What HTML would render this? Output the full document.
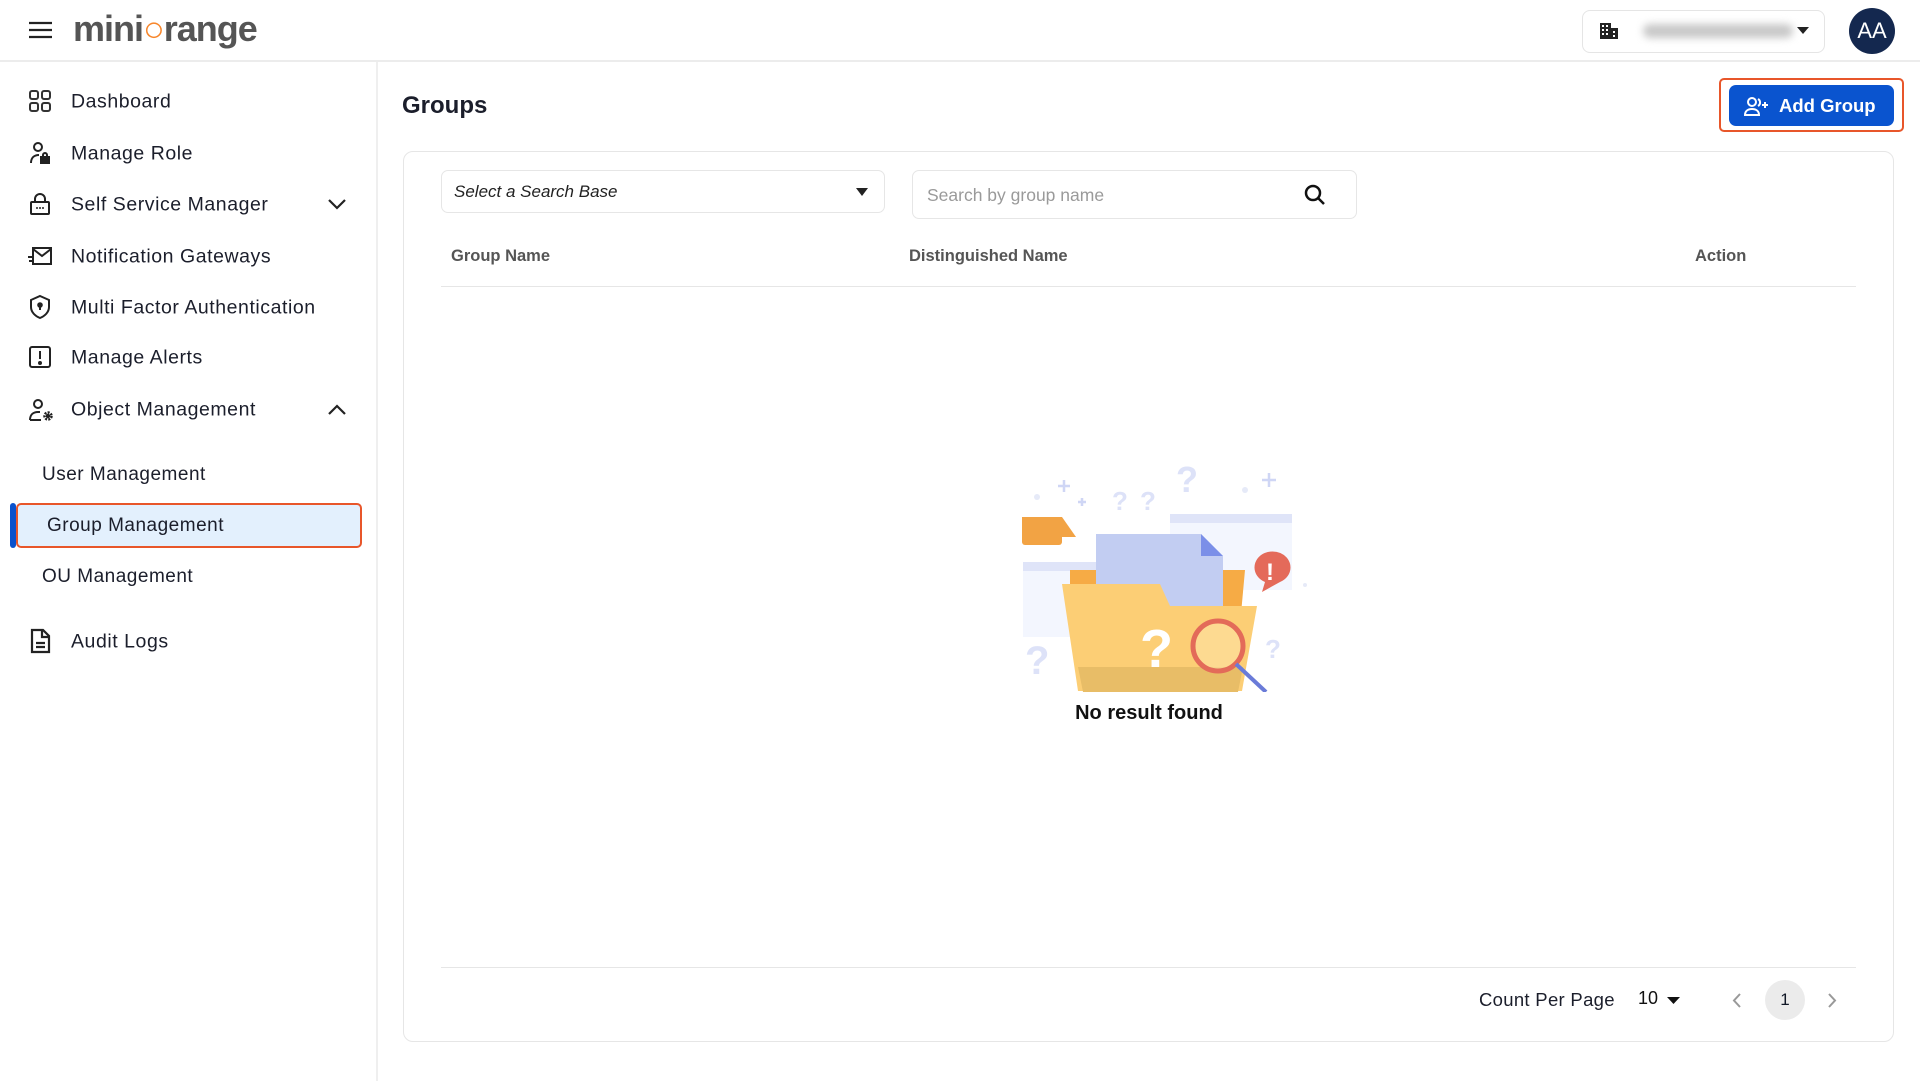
<!DOCTYPE html>
<html><head><meta charset="utf-8"><style>
*{box-sizing:border-box;margin:0;padding:0}
body{width:1920px;height:1081px;background:#fff;font-family:"Liberation Sans",sans-serif;color:#111827;position:relative;overflow:hidden}
.abs{position:absolute}
.hdr{left:0;top:0;width:1920px;height:62px;border-bottom:2px solid #ececec}
.side{left:376px;top:62px;width:2px;height:1019px;background:#efefef}
.nav{position:absolute;left:71px;font-size:19.5px;color:#1b1e2b;letter-spacing:.55px;transform:translateY(-50%)}
.ico{position:absolute;left:28px;transform:translateY(-50%)}
.sub{position:absolute;left:42px;font-size:19px;color:#1b1e2b;transform:translateY(-50%);letter-spacing:.5px}
svg{display:block}
</style></head><body>
<div class="abs hdr"></div>
<svg class="abs" style="left:29px;top:21px" width="23" height="18"><g stroke="#222" stroke-width="2.2"><line x1="0" y1="2" x2="23" y2="2"/><line x1="0" y1="9" x2="23" y2="9"/><line x1="0" y1="16" x2="23" y2="16"/></g></svg>
<div class="abs" style="left:73px;top:9px;font-size:36px;font-weight:bold;color:#555;letter-spacing:-1px;line-height:40px">mini<span style="color:#f7862b">&#x25CB;</span>range</div>
<div class="abs" style="left:1582px;top:10px;width:243px;height:43px;border:1px solid #e5e5e5;border-radius:8px"></div>
<svg class="abs" style="left:1600px;top:23px" width="18" height="16"><rect x="0" y="0" width="11" height="16" fill="#222"/><rect x="11" y="5" width="7" height="11" fill="#222"/><g fill="#fff"><rect x="2" y="2" width="2" height="2"/><rect x="6" y="2" width="2" height="2"/><rect x="2" y="6" width="2" height="2"/><rect x="6" y="6" width="2" height="2"/><rect x="2" y="10" width="2" height="2"/><rect x="6" y="10" width="2" height="2"/><rect x="13" y="8" width="2" height="2"/><rect x="13" y="12" width="2" height="2"/></g></svg>
<div class="abs" style="left:1643px;top:24px;width:150px;height:14px;background:#c8c8c8;border-radius:7px;filter:blur(4px)"></div>
<svg class="abs" style="left:1797px;top:27px" width="12" height="7"><path d="M0 0H12L6 7Z" fill="#222"/></svg>
<div class="abs" style="left:1849px;top:8px;width:46px;height:46px;border-radius:50%;background:#14284f;color:#fff;font-size:22px;text-align:center;line-height:46px">AA</div>

<div class="abs side"></div>
<svg class="ico" style="top:101px" width="24" height="24" fill="none" stroke="#333" stroke-width="2"><rect x="2" y="2" width="8" height="8" rx="2"/><rect x="14" y="2" width="8" height="8" rx="2"/><rect x="2" y="14" width="8" height="8" rx="2"/><rect x="14" y="14" width="8" height="8" rx="2"/></svg>
<div class="nav" style="top:102px">Dashboard</div>
<svg class="ico" style="top:153px" width="24" height="24" fill="none" stroke="#222" stroke-width="2"><circle cx="10" cy="6" r="4"/><path d="M3 22c0-5 3-8 8-8"/><rect x="13" y="16" width="8" height="6" fill="#222"/><path d="M15 16v-2a2 2 0 0 1 4 0v2"/></svg>
<div class="nav" style="top:154px">Manage Role</div>
<svg class="ico" style="top:204px" width="24" height="24" fill="none" stroke="#222" stroke-width="2"><rect x="3" y="10" width="18" height="12" rx="1"/><path d="M7 10V7a5 5 0 0 1 10 0v3"/><g fill="#222" stroke="none"><circle cx="9" cy="16" r="1"/><circle cx="12" cy="16" r="1"/><circle cx="15" cy="16" r="1"/></g></svg>
<div class="nav" style="top:205px">Self Service Manager</div>
<svg class="abs" style="left:328px;top:199px" width="18" height="11" fill="none" stroke="#222" stroke-width="2.2"><path d="M1 1l8 8 8-8"/></svg>
<svg class="ico" style="top:256px" width="24" height="24" fill="none" stroke="#222" stroke-width="2"><rect x="5" y="4" width="18" height="16"/><path d="M5 5l9 7 9-7"/><path d="M0 13h4M1 17h3"/></svg>
<div class="nav" style="top:257px">Notification Gateways</div>
<svg class="ico" style="top:307px" width="24" height="26" fill="none" stroke="#222" stroke-width="2"><path d="M12 2l9 4v7c0 5-4 9-9 11-5-2-9-6-9-11V6z"/><circle cx="12" cy="11" r="1.8" fill="#222"/><path d="M12 12v4"/></svg>
<div class="nav" style="top:308px">Multi Factor Authentication</div>
<svg class="ico" style="top:357px" width="24" height="24" fill="none" stroke="#222" stroke-width="2"><rect x="2" y="2" width="20" height="20" rx="2"/><path d="M12 6v8"/><circle cx="12" cy="18" r="1" fill="#222"/></svg>
<div class="nav" style="top:358px">Manage Alerts</div>
<svg class="ico" style="top:410px" width="28" height="24" fill="none" stroke="#222" stroke-width="2"><circle cx="10" cy="6" r="4"/><path d="M2 22c0-5 3-8 8-8h2"/><path d="M2 22h11"/><circle cx="20" cy="18" r="3.5" stroke-width="2.5" stroke-dasharray="2 1.2"/><circle cx="20" cy="18" r="1.2" fill="#222"/></svg>
<div class="nav" style="top:410px">Object Management</div>
<svg class="abs" style="left:328px;top:404px" width="18" height="11" fill="none" stroke="#222" stroke-width="2.2"><path d="M1 10l8-8 8 8"/></svg>
<div class="sub" style="top:475px">User Management</div>
<div class="abs" style="left:10px;top:503px;width:6px;height:45px;background:#0b52cc;border-radius:3px"></div>
<div class="abs" style="left:16px;top:503px;width:346px;height:45px;background:#e3f0fd;border:2px solid #e8562a;border-radius:5px"></div>
<div class="sub" style="top:526px;left:47px">Group Management</div>
<div class="sub" style="top:577px">OU Management</div>
<svg class="ico" style="top:641px" width="24" height="26" fill="none" stroke="#222" stroke-width="2.2"><path d="M4 2h11l6 6v16H4z"/><path d="M14 2v7h7"/><path d="M8 15h9M8 19h9"/></svg>
<div class="nav" style="top:642px">Audit Logs</div>

<div class="abs" style="left:402px;top:92px;font-size:24px;font-weight:bold;color:#1b1e2b">Groups</div>
<div class="abs" style="left:1719px;top:78px;width:185px;height:54px;border:2px solid #e8562a;border-radius:5px"></div>
<div class="abs" style="left:1729px;top:85px;width:165px;height:41px;background:#0a54cf;border-radius:7px;color:#fff;font-weight:bold;font-size:18.5px;line-height:41px;padding-left:50px">Add Group</div>
<svg class="abs" style="left:1744px;top:96px" width="26" height="20" fill="none" stroke="#fff" stroke-width="2"><circle cx="8" cy="6" r="4"/><path d="M1 19c0-4 3-6 7-6s7 2 7 6z"/><path d="M14 3a4 4 0 0 1 0 7"/><path d="M21 6v6M18 9h6"/></svg>

<div class="abs" style="left:403px;top:151px;width:1491px;height:891px;border:1px solid #e6e6e6;border-radius:10px"></div>
<div class="abs" style="left:441px;top:170px;width:444px;height:43px;border:1px solid #e6e6e6;border-radius:7px;font-style:italic;font-size:17px;padding:11px 12px;color:#222">Select a Search Base</div>
<svg class="abs" style="left:856px;top:188px" width="12" height="8"><path d="M0 0H12L6 8Z" fill="#222"/></svg>
<div class="abs" style="left:912px;top:170px;width:445px;height:49px;border:1px solid #e6e6e6;border-radius:7px;font-size:17.5px;padding:14px 14px;color:#9a9a9a">Search by group name</div>
<svg class="abs" style="left:1303px;top:183px" width="24" height="24" fill="none" stroke="#111" stroke-width="2.5"><circle cx="10" cy="10" r="7"/><path d="M15 15l6 6"/></svg>
<div class="abs" style="left:451px;top:247px;font-size:16.5px;font-weight:bold;color:#555">Group Name</div>
<div class="abs" style="left:909px;top:247px;font-size:16.5px;font-weight:bold;color:#555">Distinguished Name</div>
<div class="abs" style="left:1695px;top:247px;font-size:16.5px;font-weight:bold;color:#555">Action</div>
<div class="abs" style="left:441px;top:286px;width:1415px;height:1px;background:#e6e6e6"></div>

<svg class="abs" style="left:1000px;top:462px" width="310" height="230">
<g fill="#dde2f8" font-weight="bold" font-family="Liberation Sans">
<text x="112" y="48" font-size="26">?</text>
<text x="140" y="48" font-size="26">?</text>
<text x="176" y="30" font-size="36">?</text>
<text x="25" y="212" font-size="40">?</text>
<text x="265" y="196" font-size="26">?</text>
</g>
<g stroke="#cfd6f5" stroke-width="2.5"><path d="M58 24h12M64 18v12M78 40h8M82 36v8M262 18h14M269 11v14"/></g>
<g fill="#e6eaf8"><circle cx="37" cy="35" r="3"/><circle cx="245" cy="28" r="3"/><circle cx="305" cy="123" r="2"/></g>
<rect x="170" y="52" width="122" height="76" fill="#f3f6fe"/><rect x="170" y="52" width="122" height="9" fill="#dfe4f8"/>
<rect x="23" y="100" width="110" height="75" fill="#f3f6fe"/><rect x="23" y="100" width="110" height="9" fill="#dfe4f8"/>
<path d="M22 55h40l14 20H22z" fill="#f2a344"/><rect x="22" y="55" width="40" height="28" rx="3" fill="#f2a344"/>
<path d="M280 120a18 16 0 1 0-15 0l-3 10z" fill="#e46a5a"/><text x="266" y="118" font-size="24" font-weight="bold" fill="#fff" font-family="Liberation Sans">!</text>
<path d="M70 108h175l-5 55H70z" fill="#f6ab45"/>
<path d="M96 72h105l22 22v60H96z" fill="#c2cdf2"/><path d="M201 72l22 22h-22z" fill="#7b8fe8"/>
<path d="M62 122h98l10 22h87l-15 85H78z" fill="#fcce75"/>
<path d="M78 205h165l-5 25H83z" fill="#e8bd67"/>
<text x="140" y="205" font-size="54" font-weight="bold" fill="#fff" font-family="Liberation Sans">?</text>
<circle cx="218" cy="184" r="25" fill="#fde2a4" fill-opacity=".6" stroke="#e36b59" stroke-width="5"/>
<path d="M236 202l30 28" stroke="#6a7bd8" stroke-width="4"/>
</svg>
<div class="abs" style="left:1000px;top:702px;width:298px;text-align:center;font-size:20px;font-weight:bold;color:#111">No result found</div>

<div class="abs" style="left:441px;top:967px;width:1415px;height:1px;background:#e6e6e6"></div>
<div class="abs" style="left:1479px;top:989px;font-size:18.5px;letter-spacing:.3px;color:#1b1e2b">Count Per Page</div>
<div class="abs" style="left:1638px;top:988px;font-size:18px;color:#111">10</div>
<svg class="abs" style="left:1667px;top:997px" width="13" height="7"><path d="M0 0H13L6.5 7Z" fill="#111"/></svg>
<svg class="abs" style="left:1732px;top:993px" width="9" height="15" fill="none" stroke="#999" stroke-width="2"><path d="M8 1L2 7.5 8 14"/></svg>
<div class="abs" style="left:1765px;top:980px;width:40px;height:40px;border-radius:50%;background:#ebebeb;text-align:center;line-height:40px;font-size:17px">1</div>
<svg class="abs" style="left:1828px;top:993px" width="9" height="15" fill="none" stroke="#999" stroke-width="2"><path d="M1 1l6 6.5L1 14"/></svg>
</body></html>
